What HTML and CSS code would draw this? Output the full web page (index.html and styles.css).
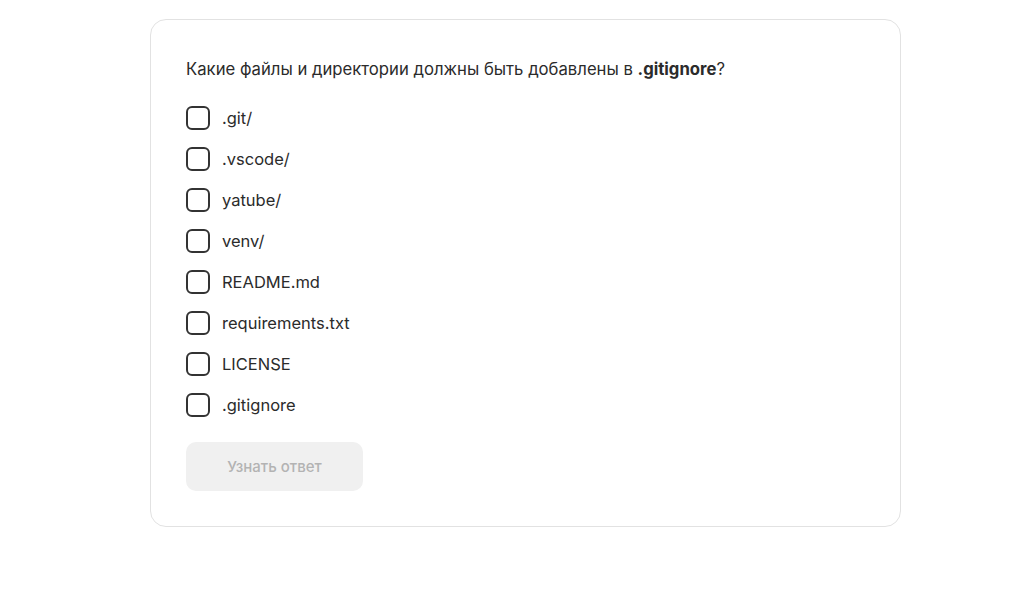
FILE: index.html
```html
<!DOCTYPE HTML>
<html>
<head>
    <meta charset="UTF-8">
    <meta name="viewport" content="width=device-width, initial-scale=1">
    <title>Квиз</title>
    <link rel="stylesheet" href="styles.css">
</head>
<body>
    <div class="quiz">
        <p class="question">Какие файлы и директории должны быть добавлены в <b>.gitignore</b>?</p>
        <div class="options">
            <label class="option"><input type="checkbox"><span class="box"></span>.git/</label>
            <label class="option"><input type="checkbox"><span class="box"></span>.vscode/</label>
            <label class="option"><input type="checkbox"><span class="box"></span>yatube/</label>
            <label class="option"><input type="checkbox"><span class="box"></span>venv/</label>
            <label class="option"><input type="checkbox"><span class="box"></span>README.md</label>
            <label class="option"><input type="checkbox"><span class="box"></span>requirements.txt</label>
            <label class="option"><input type="checkbox"><span class="box"></span>LICENSE</label>
            <label class="option"><input type="checkbox"><span class="box"></span>.gitignore</label>
        </div>
        <button class="answer" disabled>Узнать ответ</button>
    </div>
</body>
</html>
```

FILE: styles.css
```css
body {margin: 0; padding: 19px 0 0; background: #fff; font-family: Inter, "Noto Sans", sans-serif; color: #2b2b2b;}
.quiz {width: 751px; box-sizing: border-box; margin-left: 150px; padding: 36px 35px 35px; border: 1px solid #e2e2e2; border-radius: 16px; background: #fff;}
.question {margin: 0 0 24px; font-size: 16.7px; line-height: 26px;}
.question b {font-weight: 700;}
.options {display: flex; flex-direction: column; gap: 17px;}
.option {display: flex; align-items: center; gap: 12px; font-size: 16.5px; line-height: 24px; cursor: pointer;}
.option input {display: none;}
.box {width: 20px; height: 20px; border: 2px solid #333; border-radius: 6px; flex: none;}
.answer {margin-top: 25px; width: 177px; height: 49px; border: none; border-radius: 10px; background: #f0f0f0; color: #b3b3b3; font-family: inherit; font-size: 15px; font-weight: 500;}
```
